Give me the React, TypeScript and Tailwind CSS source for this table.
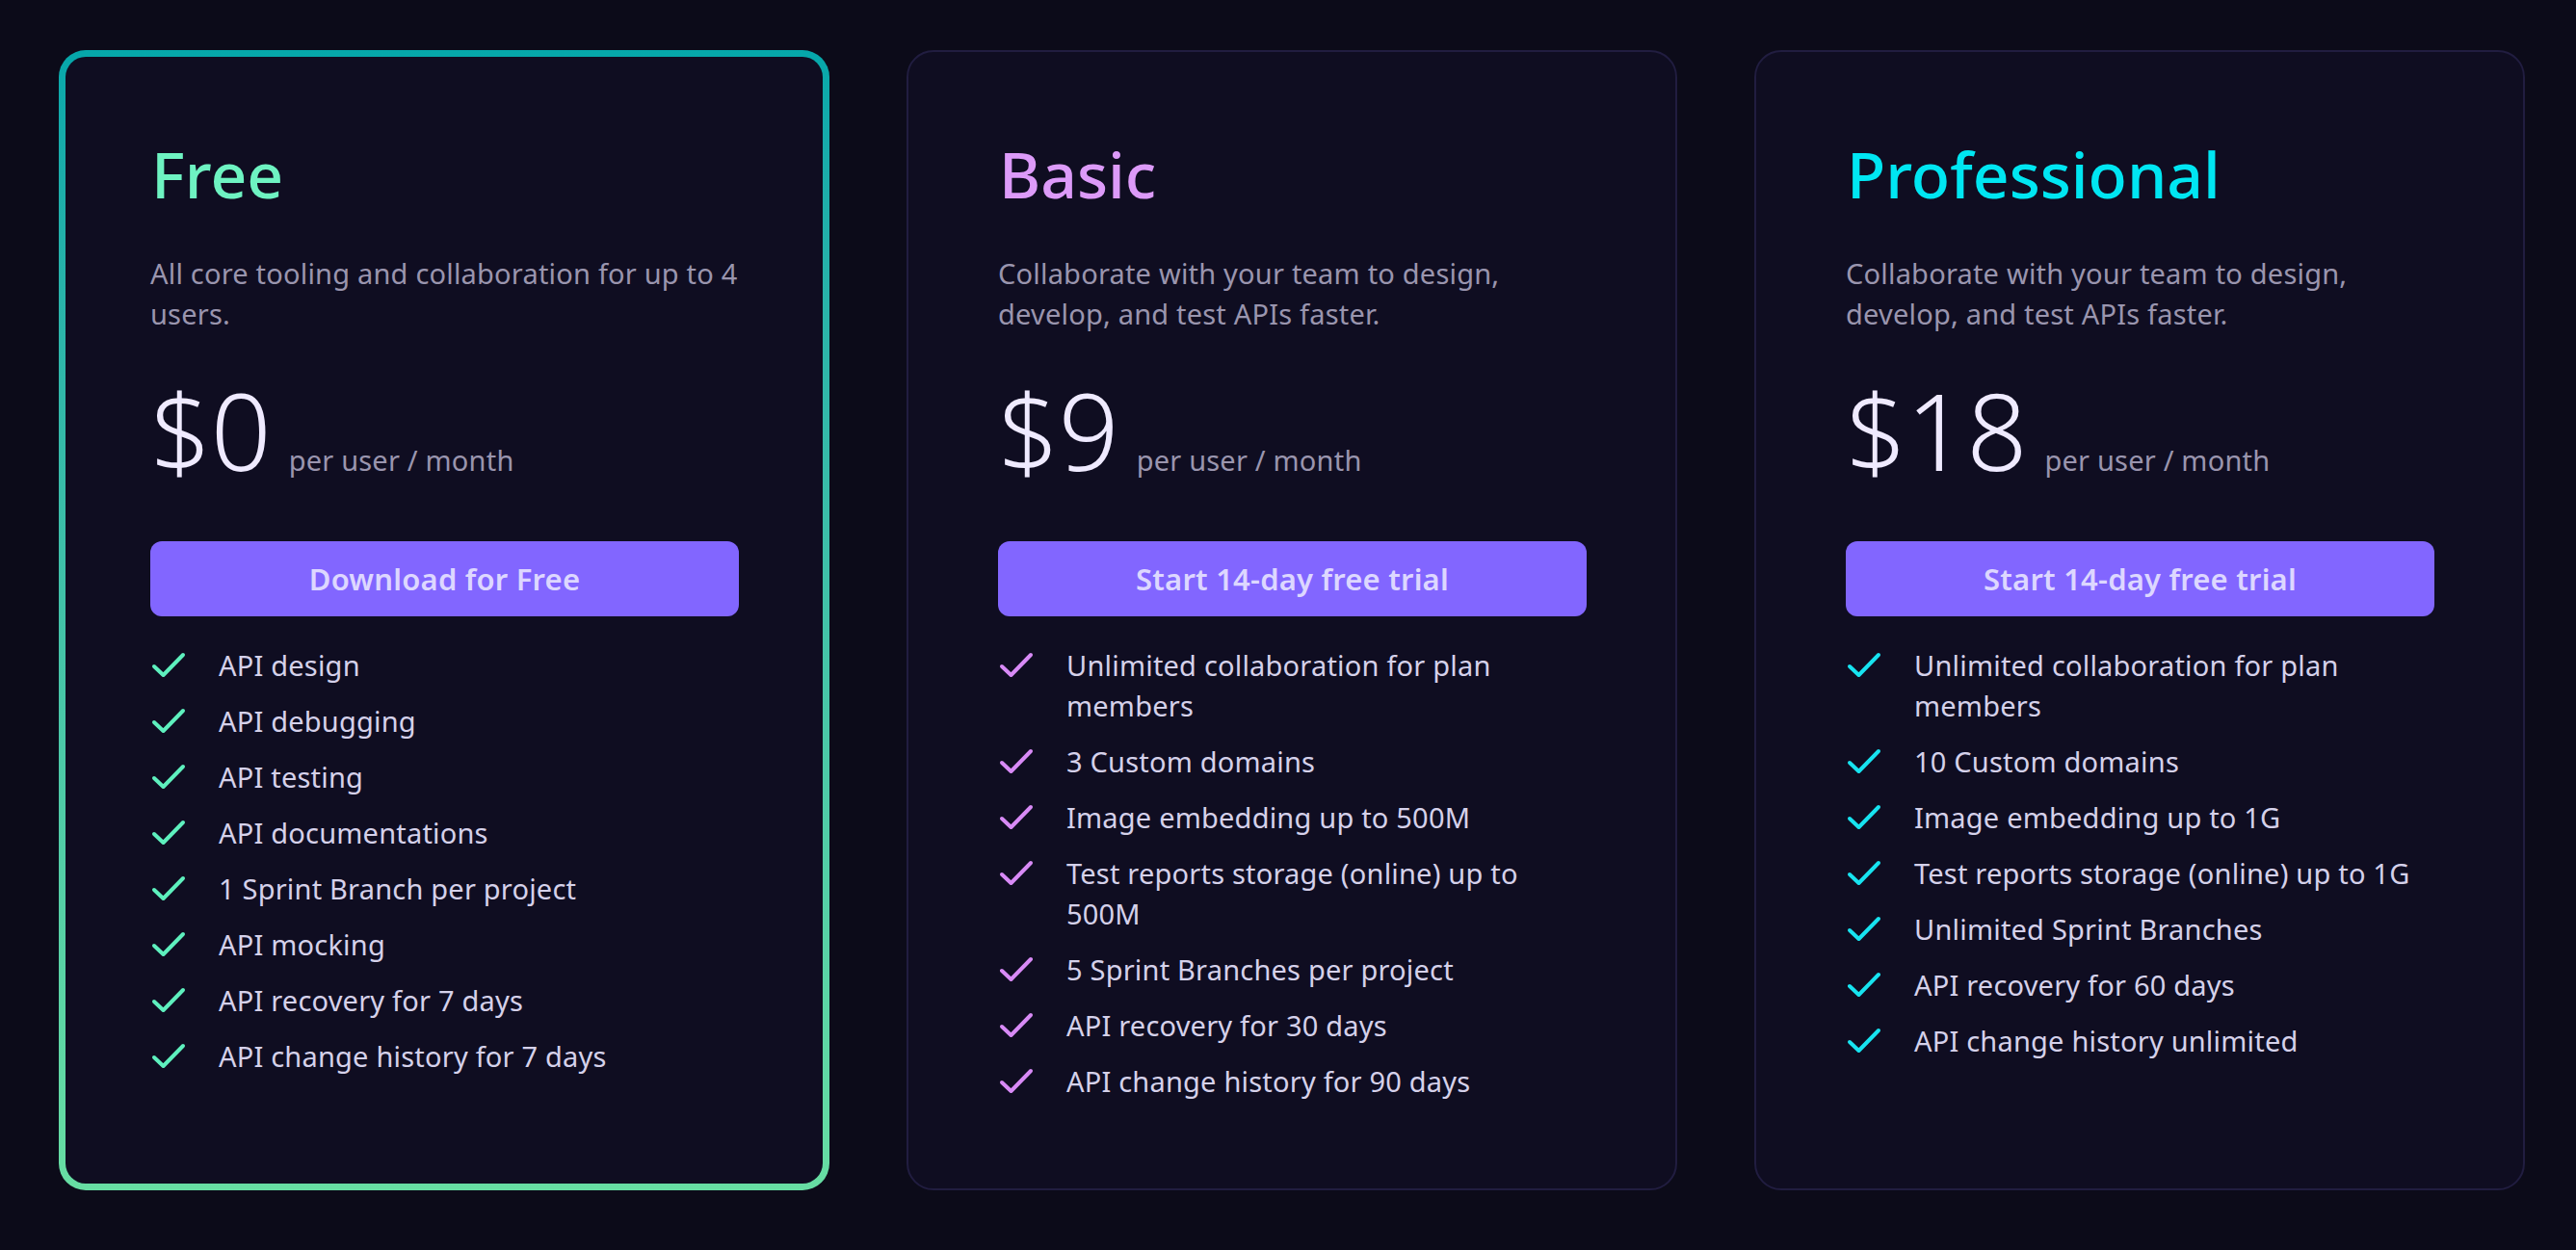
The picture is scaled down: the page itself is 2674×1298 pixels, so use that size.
import React from "react";

type Plan = {
  name: string;
  titleColor: string;
  checkColor: string;
  description: string;
  price: string;
  cta: string;
  features: string[];
  highlighted?: boolean;
};

const plans: Plan[] = [
  {
    name: "Free",
    titleColor: "text-[#6ef3c2]",
    checkColor: "#5ef0be",
    description: "All core tooling and collaboration for up to 4 users.",
    price: "$0",
    cta: "Download for Free",
    highlighted: true,
    features: [
      "API design",
      "API debugging",
      "API testing",
      "API documentations",
      "1 Sprint Branch per project",
      "API mocking",
      "API recovery for 7 days",
      "API change history for 7 days",
    ],
  },
  {
    name: "Basic",
    titleColor: "text-[#dc9af8]",
    checkColor: "#d88af6",
    description: "Collaborate with your team to design, develop, and test APIs faster.",
    price: "$9",
    cta: "Start 14-day free trial",
    features: [
      "Unlimited collaboration for plan members",
      "3 Custom domains",
      "Image embedding up to 500M",
      "Test reports storage (online) up to 500M",
      "5 Sprint Branches per project",
      "API recovery for 30 days",
      "API change history for 90 days",
    ],
  },
  {
    name: "Professional",
    titleColor: "text-[#00e6f2]",
    checkColor: "#17e3f0",
    description: "Collaborate with your team to design, develop, and test APIs faster.",
    price: "$18",
    cta: "Start 14-day free trial",
    features: [
      "Unlimited collaboration for plan members",
      "10 Custom domains",
      "Image embedding up to 1G",
      "Test reports storage (online) up to 1G",
      "Unlimited Sprint Branches",
      "API recovery for 60 days",
      "API change history unlimited",
    ],
  },
];

const CheckIcon = ({ color }: { color: string }) => (
  <svg width="38" height="27" viewBox="0 0 38 27" fill="none" className="mt-[7px] shrink-0">
    <polyline
      points="4,15 13.5,24 34,3"
      stroke={color}
      strokeWidth="4"
      strokeLinecap="round"
      strokeLinejoin="round"
    />
  </svg>
);

const CardBody = ({ plan }: { plan: Plan }) => (
  <>
    <h3 className={`ml-px text-[66px] leading-[80px] font-medium ${plan.titleColor}`}>{plan.name}</h3>

    <p className="mt-[43px] text-[29px] leading-[42px] tracking-[0.2px] text-[#9a95ae]">
      {plan.description}
    </p>

    <div className="mt-[43px] flex items-baseline gap-[18px]">
      <span className="text-[110px] leading-[112px] font-light text-[#efeaff]">{plan.price}</span>
      <span className="text-[29px] leading-[42px] tracking-[0.2px] text-[#9a95ae]">per user / month</span>
    </div>

    <button className="mt-[60px] h-[78px] w-full rounded-[12px] bg-[#8266ff] text-[31px] font-semibold tracking-[0.2px] text-[#ddd7ff]">
      {plan.cta}
    </button>

    <ul className="mt-[30px] flex flex-col gap-[16px]">
      {plan.features.map((f) => (
        <li key={f} className="flex items-start gap-[33px]">
          <CheckIcon color={plan.checkColor} />
          <span className="text-[29px] leading-[42px] tracking-[0.2px] text-[#d5d1ea]">{f}</span>
        </li>
      ))}
    </ul>
  </>
);

export default function App() {
  return (
    <div
      className="min-h-screen bg-[#0c0b19] pl-[61px] pr-[53px] pt-[52px] pb-[62px]"
      style={{ fontFamily: '"Noto Sans", "Open Sans", sans-serif' }}
    >
      <div className="grid grid-cols-3 gap-[80px]">
        {plans.map((plan) =>
          plan.highlighted ? (
            <div
              key={plan.name}
              className="rounded-[28px] bg-gradient-to-b from-[#05a7aa] to-[#67dda3] p-[7px]"
            >
              <div className="h-full rounded-[21px] bg-[#0f0d21] pl-[88px] pr-[87px] pt-[81px] pb-[83px]">
                <CardBody plan={plan} />
              </div>
            </div>
          ) : (
            <div
              key={plan.name}
              className="rounded-[28px] border-2 border-[#211d40] bg-[#0f0d21] pl-[93px] pr-[92px] pt-[86px] pb-[90px]"
            >
              <CardBody plan={plan} />
            </div>
          )
        )}
      </div>
    </div>
  );
}
